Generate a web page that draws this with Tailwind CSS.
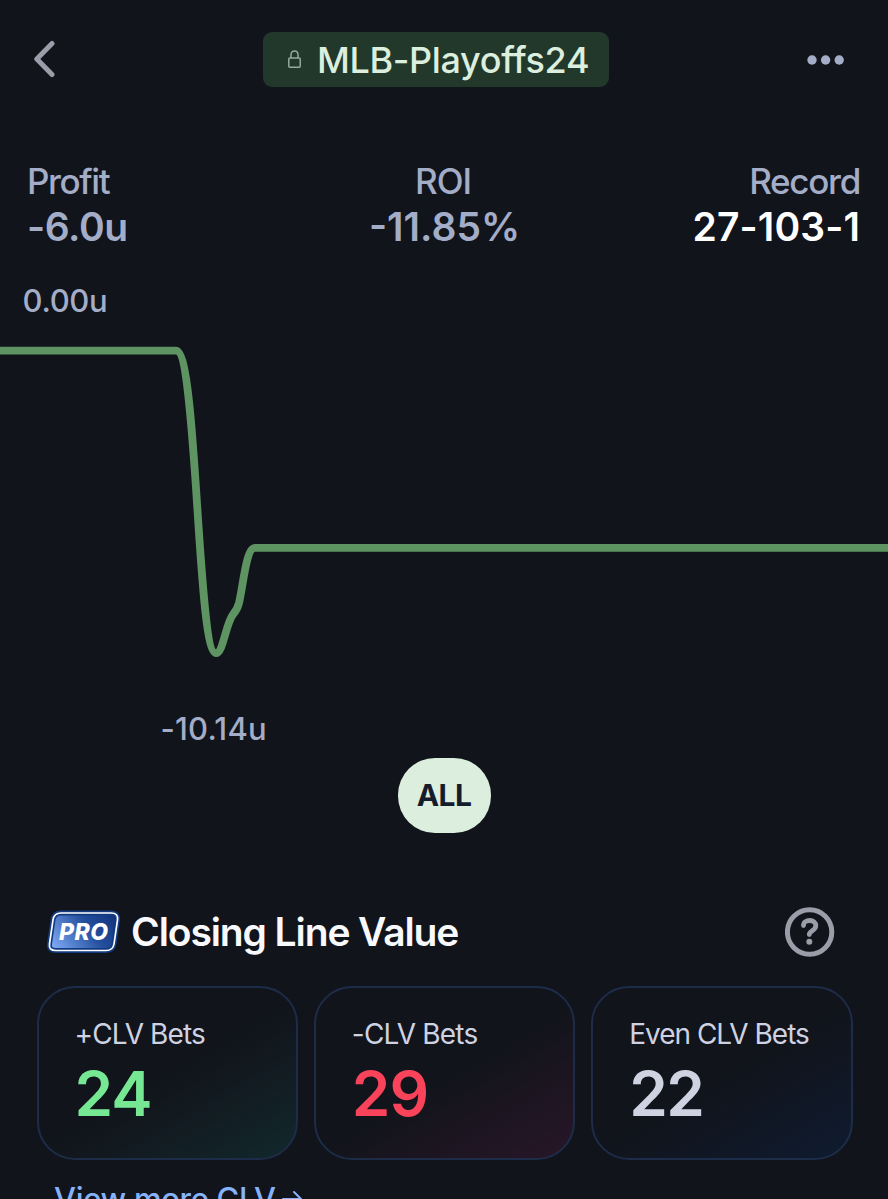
<!DOCTYPE html>
<html lang="en">
  <head>
    <meta charset="UTF-8" />
    <meta name="viewport" content="width=device-width, initial-scale=1.0" />
    <title>MLB-Playoffs24</title>
    <script src="https://cdn.jsdelivr.net/npm/@tailwindcss/browser@4"></script>
  </head>
  <body class="bg-[#11141b] overflow-hidden">
    <main class="flex flex-col w-[888px] h-[1199px] overflow-hidden font-['Inter',sans-serif] text-[#a3adc8] whitespace-nowrap">
      <header class="grid grid-cols-[263px_346px_1fr] items-center h-[55px] mt-[31.5px] shrink-0">
        <svg class="ml-[33px]" width="24" height="38" viewBox="0 0 24 38" fill="none" stroke="#9b9da8" stroke-width="5" stroke-linecap="round" stroke-linejoin="round">
          <path d="M19 3.5L3.8 19L19 34.5" />
        </svg>
        <div class="flex items-center h-[55px] rounded-[9px] bg-[#21382b] pl-[25px]">
          <svg width="13" height="18" viewBox="0 0 13 18" fill="none" stroke="#92ab9b" stroke-width="1.5">
            <rect x="0.8" y="8" width="11.4" height="9.2" rx="1" />
            <path d="M3 8V4.7C3 2.3 4.4 0.9 6.5 0.9S10 2.3 10 4.7V8" />
          </svg>
          <h1 class="ml-[16px] mt-0.5 text-[36px] leading-[55px] font-medium tracking-[-0.35px] text-[#dceedd]">MLB-Playoffs24</h1>
        </div>
        <svg class="justify-self-end mr-[43px] mt-px" width="38" height="10" viewBox="0 0 38 10" fill="#a3adc8">
          <circle cx="5" cy="5" r="4.7" />
          <circle cx="18.6" cy="5" r="4.7" />
          <circle cx="32.2" cy="5" r="4.7" />
        </svg>
      </header>

      <section class="grid grid-cols-3 shrink-0 mt-[71.5px] pl-[26px] pr-7 text-[35px] leading-[46px]">
        <div>
          <p class="pl-px font-[450] tracking-[-1.4px]">Profit</p>
          <p class="pl-px text-[39px] font-semibold tracking-[-0.4px]">-6.0u</p>
        </div>
        <div class="text-center">
          <p class="font-[450] tracking-[-1px]">ROI</p>
          <p class="pl-[3px] text-[39px] font-semibold tracking-[0px]">-11.85%</p>
        </div>
        <div class="text-right">
          <p class="font-[450] tracking-[-1.3px]">Record</p>
          <p class="text-[39px] font-semibold tracking-[0.1px] text-white">27-103-1</p>
        </div>
      </section>

      <!-- profit chart -->
      <section class="flex flex-col shrink-0 mt-[31px] text-[31px] leading-[40px] font-medium">
        <p class="pl-[22.5px] tracking-[-0.3px]">0.00u</p>
        <svg class="-mt-px" width="888" height="350" viewBox="0 320 888 350" fill="none" stroke="#5e9461" stroke-width="7.8">
          <path d="M0 350.7H176C197.5 350.7 197 653.2 216 653.2C223 653.2 226 623 233 614.5C236 611 237.5 609 239 603C243.5 584 246 547.9 255 547.9H888" />
        </svg>
        <p class="mt-[39px] pl-[160.5px] tracking-[0.2px]">-10.14u</p>
      </section>

      <button class="self-center shrink-0 mt-[8.5px] w-[93px] h-[75px] rounded-[37px] bg-[#dceedd] text-[30px] font-bold tracking-[-0.6px] text-[#151c2b]">ALL</button>

      <section class="shrink-0 mt-[74.5px]">
        <div class="flex items-center h-[50px] pl-[46px] pr-[53px]">
          <svg width="75" height="46" viewBox="0 0 75 46">
            <defs>
              <linearGradient id="pro" x1="0" y1="0.7" x2="1" y2="0.3">
                <stop offset="0" stop-color="#7aa5f0" />
                <stop offset="0.6" stop-color="#24509f" />
                <stop offset="1" stop-color="#12377f" />
              </linearGradient>
            </defs>
            <path d="M15 4H65Q72.500 4 71.500 11L68 35Q67 41.500 60 41.500H10Q2.500 41.500 3.500 35L7 11Q8 4 15 4Z" fill="url(#pro)" stroke="#133a80" stroke-width="5" />
            <path d="M15 4H65Q72.500 4 71.500 11L68 35Q67 41.500 60 41.500H10Q2.500 41.500 3.500 35L7 11Q8 4 15 4Z" fill="none" stroke="#ffffff" stroke-width="1.700" />
            <text x="37.500" y="30.500" text-anchor="middle" textLength="49" fill="#ffffff" font-family="Inter, sans-serif" font-size="23" font-weight="800" font-style="italic">PRO</text>
          </svg>
          <h2 class="ml-[10px] text-[39px] leading-[50px] font-semibold tracking-[-1.1px] text-[#f8f9fc]">Closing Line Value</h2>
          <svg class="ml-auto" width="50" height="50" viewBox="0 0 50 50" fill="none" stroke="#9b9da8" stroke-width="5" stroke-linecap="round">
            <circle cx="24.600" cy="25" r="22.200" />
            <path d="M18.500 18.500C18.500 14.800 21.500 13.500 24.700 13.500C28.500 13.500 30.800 15.700 30.800 18.500C30.800 21.300 29 22.600 27 23.900C25.300 25 24.300 26 24.300 27.500" stroke-width="4.800" />
            <circle cx="24.300" cy="34.800" r="3" fill="#9b9da8" stroke="none" />
          </svg>
        </div>

        <div class="grid grid-cols-3 gap-4 mt-[29px] pl-[36.5px] pr-[35.5px]">
          <div class="h-[174px] rounded-[38px] border-2 border-[#1d2c48] bg-linear-150 from-[#11141b] from-50% to-[#11282c] pt-[25px] pl-[36px]">
            <p class="text-[28px] leading-[42px] tracking-[-0.9px] text-[#ced2e1]">+CLV Bets</p>
            <p class="mt-1 text-[62px] leading-[70px] font-semibold tracking-[-1px] text-[#76e894]">24</p>
          </div>
          <div class="h-[174px] rounded-[38px] border-2 border-[#1d2c48] bg-linear-150 from-[#11141b] from-50% to-[#281628] pt-[25px] pl-[36px]">
            <p class="text-[28px] leading-[42px] tracking-[-0.8px] text-[#ced2e1]">-CLV Bets</p>
            <p class="mt-1 text-[62px] leading-[70px] font-semibold tracking-[-1px] text-[#f8435a]">29</p>
          </div>
          <div class="h-[174px] rounded-[38px] border-2 border-[#1d2c48] bg-linear-150 from-[#11141b] from-50% to-[#0f1b30] pt-[25px] pl-[36px]">
            <p class="text-[28px] leading-[42px] tracking-[-1px] text-[#ced2e1]">Even CLV Bets</p>
            <p class="mt-1 text-[62px] leading-[70px] font-semibold tracking-[-1.5px] text-[#ced2e1]">22</p>
          </div>
        </div>

        <a class="flex items-center mt-[18.5px] pl-[54px] text-[31px] leading-[40px] font-medium tracking-[-0.3px] text-[#86b1fb]" href="#">
          View more CLV
          <svg class="ml-1.5" width="22" height="20" viewBox="0 0 22 20" fill="none" stroke="#86b1fb" stroke-width="2" stroke-linecap="round" stroke-linejoin="round">
            <path d="M1 10H19M12 3L19 10L12 17" />
          </svg>
        </a>
      </section>
    </main>
  </body>
</html>
